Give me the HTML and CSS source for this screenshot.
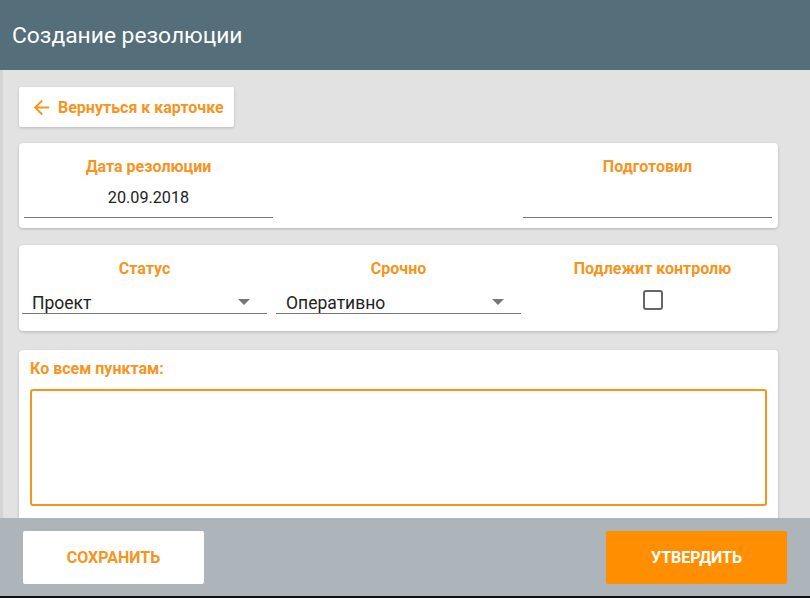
FILE: index.html
```html
<!DOCTYPE html>
<html lang="ru">
<head>
<meta charset="utf-8">
<title>Создание резолюции</title>
<link rel="stylesheet" href="styles.css">
</head>
<body>
<div class="app">
  <header class="topbar">Создание резолюции</header>
  <main class="content">
    <button class="back-btn">
      <svg class="back-icon" width="23" height="23" viewBox="0 0 24 24"><path d="M20 11H7.83l5.59-5.59L12 4l-8 8 8 8 1.41-1.41L7.83 13H20v-2z" fill="#f7941d"/></svg>
      <span>Вернуться к карточке</span>
    </button>

    <section class="card card-dates">
      <div class="field">
        <div class="label">Дата резолюции</div>
        <div class="input centered">20.09.2018</div>
      </div>
      <div class="spacer"></div>
      <div class="field">
        <div class="label">Подготовил</div>
        <div class="input centered"></div>
      </div>
    </section>

    <section class="card card-status">
      <div class="field">
        <div class="label">Статус</div>
        <div class="select"><span>Проект</span><span class="caret"></span></div>
      </div>
      <div class="field">
        <div class="label">Срочно</div>
        <div class="select"><span>Оперативно</span><span class="caret"></span></div>
      </div>
      <div class="field field-check">
        <div class="label">Подлежит контролю</div>
        <div class="checkbox"></div>
      </div>
    </section>

    <section class="card card-text">
      <div class="label label-left">Ко всем пунктам:</div>
      <div class="textarea"></div>
    </section>
  </main>
  <footer class="footer">
    <button class="btn btn-save">СОХРАНИТЬ</button>
    <button class="btn btn-approve">УТВЕРДИТЬ</button>
  </footer>
  <div class="bottom-edge"></div>
</div>
</body>
</html>
```

FILE: styles.css
```css
* { box-sizing: border-box; }
html, body { margin: 0; padding: 0; }
body {
  width: 810px;
  height: 598px;
  overflow: hidden;
  font-family: Roboto, "Liberation Sans", sans-serif;
  background: #e2e2e2;
}
.app {
  display: flex;
  flex-direction: column;
  height: 598px;
}
.topbar {
  height: 70px;
  flex: none;
  background: #546e7a;
  color: #fff;
  font-size: 22.8px;
  line-height: 26px;
  padding: 23px 0 0 12px;
}
.content {
  flex: 1;
  overflow: hidden;
  background: #e2e2e2;
  border-left: 3px solid #d4d4d4;
  padding: 17px 32px 0 16px;
  display: flex;
  flex-direction: column;
  align-items: flex-start;
}
.content > * { flex: none; }
.back-btn {
  border: none;
  background: #fff;
  height: 40px;
  width: 215px;
  border-radius: 2px;
  box-shadow: 0 1px 3px rgba(0,0,0,0.18);
  display: flex;
  align-items: center;
  padding: 0 0 0 11px;
  gap: 5px;
  font-family: Roboto, "Liberation Sans", sans-serif;
  font-weight: bold;
  font-size: 16px;
  color: #f7941d;
  margin-bottom: 16px;
}
.back-icon { flex: none; }
.card {
  align-self: stretch;
  background: #fff;
  border-radius: 4px;
  box-shadow: 0 1px 3px rgba(0,0,0,0.2);
}
.label {
  color: #f7941d;
  font-weight: bold;
  font-size: 16px;
  line-height: 19px;
  text-align: center;
}
.card-dates {
  height: 85px;
  display: flex;
  padding: 14px 6px 0 5px;
  margin-bottom: 17px;
}
.card-dates .field { width: 249px; }
.card-dates .spacer { flex: 1; }
.input {
  height: 42px;
  border-bottom: 1px solid #777;
  font-size: 16.2px;
  line-height: 19px;
  color: #222;
  padding-top: 12px;
}
.centered { text-align: center; }
.card-status {
  height: 86px;
  display: flex;
  padding: 14px 0 0 3px;
  gap: 9px;
  margin-bottom: 19px;
}
.card-status .field { width: 245px; }
.select {
  height: 36px;
  border-bottom: 1px solid #777;
  display: flex;
  justify-content: space-between;
  align-items: flex-end;
  padding: 0 17px 0 10px;
  font-size: 17.5px;
  line-height: 20px;
  color: #222;
}
.caret {
  width: 0;
  height: 0;
  border-left: 6px solid transparent;
  border-right: 6px solid transparent;
  border-top: 6px solid #777;
  margin-bottom: 8px;
}
.field-check { display: flex; flex-direction: column; align-items: center; }
.checkbox {
  margin-top: 12px;
  width: 20px;
  height: 20px;
  border: 2px solid #666;
  border-radius: 3px;
}
.card-text {
  height: 200px;
  padding: 9px 11px 0 11px;
}
.label-left { text-align: left; }
.textarea {
  margin-top: 11px;
  height: 117px;
  border: 2px solid #f7941d;
  border-radius: 3px;
}
.footer {
  height: 78px;
  flex: none;
  background: #adb5ba;
  display: flex;
  justify-content: space-between;
  align-items: flex-start;
  padding: 13px 23px 0 23px;
  position: relative;
  z-index: 1;
}
.btn {
  border: none;
  width: 181px;
  height: 53px;
  border-radius: 2px;
  font-family: Roboto, "Liberation Sans", sans-serif;
  font-weight: bold;
  font-size: 16px;
}
.btn-save { background: #fff; color: #f7941d; }
.btn-approve { background: #ff8f00; color: #fff; }
.bottom-edge { height: 2px; background: #111; flex: none; }
```
